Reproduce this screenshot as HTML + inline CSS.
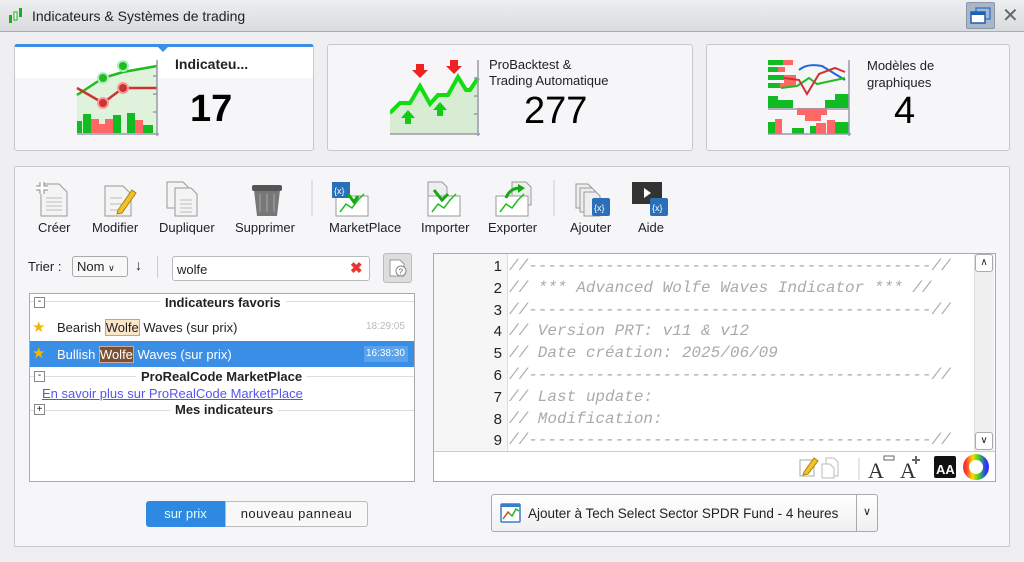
<!DOCTYPE html>
<html><head><meta charset="utf-8"><style>
*{box-sizing:border-box;margin:0;padding:0}
body{width:1024px;height:562px;overflow:hidden;background:#efeff1;font-family:"Liberation Sans",sans-serif;font-size:13px;color:#222;position:relative}
.a{position:absolute}
.title{left:0;top:0;width:1024px;height:32px;background:linear-gradient(#eceef0,#d9dbde);border-bottom:1px solid #a9acb0}
.card{border:1px solid #c9c9cc;border-radius:3px;background:#f6f5f8}
.tb{font-size:13px;text-align:center;color:#222}
.code{font-family:"Liberation Mono",monospace;font-style:italic;color:#aaa;font-size:16px;white-space:pre}
.ln{font-size:15px;color:#222;text-align:right;width:28px}
.grp{font-weight:bold;font-size:13px}
</style></head><body>
<div class="a title"></div>
<svg class="a" style="left:8px;top:6px" width="16" height="20"><rect x="1" y="9" width="3" height="8" fill="#2a2"/><rect x="6" y="6" width="3" height="8" fill="#fff" stroke="#2a2"/><rect x="11" y="2" width="3" height="9" fill="#2a2"/></svg>
<div class="a" style="left:32px;top:8px;font-size:14px;color:#222">Indicateurs &amp; Systèmes de trading</div>
<div class="a" style="left:966px;top:2px;width:29px;height:27px;background:#a9b6c6;border:1px solid #8c98a8;border-radius:2px"></div>
<svg class="a" style="left:970px;top:7px" width="22" height="18"><rect x="6" y="1" width="14" height="11" fill="none" stroke="#3a7bd0" stroke-width="1.5"/><rect x="1" y="5" width="14" height="11" fill="#fff" stroke="#1f5fb8" stroke-width="1.5"/><rect x="1" y="5" width="14" height="3" fill="#1f5fb8"/></svg>
<div class="a" style="left:1002px;top:3px;font-size:20px;color:#666">✕</div>

<!-- cards -->
<div class="a card" style="left:14px;top:44px;width:300px;height:107px;background:#f6f5f8;border-top:3px solid #3a8ee6"></div>
<div class="a" style="left:15px;top:47px;width:298px;height:31px;background:#fff"></div>
<div class="a" style="left:157px;top:46px;width:0;height:0;border-left:6px solid transparent;border-right:6px solid transparent;border-top:6px solid #3a8ee6"></div>
<svg class="a" style="left:75px;top:58px" width="90" height="78"><path d="M2 37 L28 20 L48 14 L82 8 L82 76 L2 76Z" fill="#dff2dc"/><path d="M2 37 L28 20 L48 14 L82 8" stroke="#2b2" stroke-width="2.5" fill="none"/><path d="M2 30 L28 45 L48 30 L82 30" stroke="#c33" stroke-width="2.5" fill="none"/><circle cx="28" cy="20" r="5" fill="#2b2" stroke="#aeb" stroke-width="2"/><circle cx="48" cy="8" r="5" fill="#2b2" stroke="#aeb" stroke-width="2"/><circle cx="28" cy="45" r="5" fill="#c33" stroke="#f99" stroke-width="2"/><circle cx="48" cy="30" r="5" fill="#c33" stroke="#f99" stroke-width="2"/><g fill="#1b2"><rect x="2" y="63" width="5" height="12"/><rect x="8" y="56" width="8" height="19"/><rect x="38" y="57" width="8" height="18"/><rect x="52" y="55" width="8" height="20"/><rect x="68" y="67" width="10" height="8"/></g><g fill="#f66"><rect x="16" y="61" width="8" height="14"/><rect x="24" y="66" width="6" height="9"/><rect x="30" y="61" width="8" height="14"/><rect x="60" y="62" width="8" height="13"/></g><path d="M82 2 V78 M2 76 H84 M82 18h-4M82 36h-4M82 54h-4" stroke="#99a" stroke-width="1.5"/></svg>
<div class="a" style="left:175px;top:56px;font-weight:bold;font-size:14px">Indicateu...</div>
<div class="a" style="left:190px;top:88px;font-weight:bold;font-size:38px;color:#000">17</div>

<div class="a card" style="left:327px;top:44px;width:366px;height:107px"></div>
<svg class="a" style="left:390px;top:60px" width="90" height="76"><path d="M0 53 L10 43 L20 43 L30 26 L40 44 L48 35 L58 35 L68 17 L76 30 L80 30 L88 18 L88 74 L0 74Z" fill="#d8ecd4"/><path d="M0 53 L10 43 L20 43 L30 26 L40 44 L48 35 L58 35 L68 17 L76 30 L80 30 L88 18" stroke="#1d1" stroke-width="4" fill="none"/><path d="M26 4h8v6h4l-8 8-8-8h4z" fill="#e22"/><path d="M60 0h8v6h4l-8 8-8-8h4z" fill="#e22"/><path d="M15 64h6v-6h4l-7-8-7 8h4z" fill="#1c1"/><path d="M47 56h6v-6h4l-7-8-7 8h4z" fill="#1c1"/><path d="M88 0 V76 M0 74 H90 M88 18h-4M88 36h-4M88 54h-4" stroke="#99a" stroke-width="1.5"/></svg>
<div class="a" style="left:489px;top:57px;font-size:13px;line-height:16px">ProBacktest &amp;<br>Trading Automatique</div>
<div class="a" style="left:524px;top:90px;font-size:38px;color:#000">277</div>

<div class="a card" style="left:706px;top:44px;width:304px;height:107px"></div>
<svg class="a" style="left:767px;top:58px" width="90" height="78"><g fill="#1b2"><rect x="1" y="2" width="15" height="5"/><rect x="1" y="9" width="10" height="5"/><rect x="1" y="17" width="16" height="5"/><rect x="1" y="25" width="12" height="5"/><rect x="1" y="38" width="10" height="12"/><rect x="11" y="42" width="15" height="8"/><rect x="58" y="42" width="10" height="8"/><rect x="68" y="36" width="14" height="14"/><rect x="1" y="64" width="12" height="12"/><rect x="25" y="70" width="12" height="6"/><rect x="43" y="68" width="6" height="8"/><rect x="68" y="64" width="14" height="12"/></g><g fill="#f66"><rect x="16" y="2" width="10" height="5"/><rect x="11" y="9" width="7" height="5"/><rect x="17" y="17" width="12" height="12"/><rect x="13" y="25" width="5" height="5"/><rect x="30" y="50" width="30" height="7"/><rect x="38" y="50" width="16" height="13"/><rect x="8" y="61" width="7" height="15"/><rect x="49" y="65" width="10" height="11"/><rect x="60" y="62" width="8" height="14"/></g><path d="M32 12 Q40 5 55 8 L78 22" stroke="#2266dd" stroke-width="2" fill="none"/><path d="M14 30 L30 28 L42 20 L50 26 L78 20" stroke="#2b2" stroke-width="2" fill="none"/><path d="M17 20 L32 22 L40 36 L52 16 L68 10 L78 14" stroke="#c33" stroke-width="2" fill="none"/><path d="M1 51H82M82 2V78M1 76H84" stroke="#99a" stroke-width="1.5"/></svg>
<div class="a" style="left:867px;top:57px;font-size:13px;line-height:17px">Modèles de<br>graphiques</div>
<div class="a" style="left:894px;top:90px;font-size:38px;color:#000">4</div>

<!-- main panel -->
<div class="a" style="left:14px;top:166px;width:996px;height:381px;border:1px solid #c9c9cc;border-radius:2px;background:#f6f5f8"></div>

<!-- toolbar icons -->
<svg class="a" style="left:36px;top:180px" width="520" height="38">
<g fill="#f4f4f4" stroke="#999"><path d="M5 4h18l8 8v24H5z"/><path d="M69 6h18l8 8v22H69z"/><path d="M131 2h16l6 6v20h-22z"/><path d="M139 8h16l6 6v22h-22z"/></g>
<g stroke="#bbb"><path d="M10 18h16M10 22h16M10 26h16M10 30h16M74 18h12M74 24h12M74 30h14M144 20h12M144 24h12M144 28h12M144 32h12"/></g>
<path d="M0 8h12M6 2v12" stroke="#888" stroke-width="5"/><path d="M0 8h12M6 2v12" stroke="#fff" stroke-width="3"/>
<path d="M82 30 L96 10 L100 13 L86 33 L81 34z" fill="#f3c030" stroke="#a80"/>
<path d="M218 10h26l-3 26h-20z" fill="#777"/><rect x="216" y="5" width="30" height="6" rx="2" fill="#555"/><path d="M224 14v18M231 14v18M238 14v18" stroke="#aaa"/>
<line x1="276" y1="0" x2="276" y2="36" stroke="#ccc"/>
<rect x="300" y="16" width="32" height="20" fill="#fff" stroke="#999"/><path d="M304 32l6-8 6 4 6-8 6 -6" stroke="#2b2" stroke-width="1.5" fill="none"/><rect x="296" y="2" width="18" height="16" fill="#2a6fb8"/><text x="298" y="14" font-size="9" fill="#fff" font-family="Liberation Sans">{x}</text><path d="M312 14 l6 8 4-6" stroke="#1a1" stroke-width="3" fill="none"/>
<path d="M392 2h14l5 5v18h-19z" fill="#eee" stroke="#999"/><rect x="392" y="16" width="32" height="20" fill="#fff" stroke="#999"/><path d="M396 32l6-8 6 4 6-8 6 -6" stroke="#2b2" stroke-width="1.5" fill="none"/><path d="M398 10 l8 10 6-6" stroke="#1a1" stroke-width="3" fill="none"/>
<path d="M476 2h14l5 5v18h-19z" fill="#eee" stroke="#999"/><rect x="460" y="16" width="32" height="20" fill="#fff" stroke="#999"/><path d="M464 32l6-8 6 4 6-8 6 -6" stroke="#2b2" stroke-width="1.5" fill="none"/><path d="M470 18 q4-10 14-10" stroke="#1a1" stroke-width="3" fill="none"/><path d="M482 4l7 4-7 5z" fill="#1a1"/>
<line x1="518" y1="0" x2="518" y2="36" stroke="#ccc"/>
</svg>
<svg class="a" style="left:572px;top:180px" width="100" height="40"><g fill="#eee" stroke="#999"><path d="M4 4h12l4 4v20H4z"/><path d="M8 8h12l4 4v20H8z"/><path d="M12 12h12l4 4v20H12z"/></g><rect x="20" y="18" width="18" height="18" rx="2" fill="#2a6fb8"/><text x="22" y="31" font-size="9" fill="#fff" font-family="Liberation Sans">{x}</text>
<rect x="60" y="2" width="30" height="22" fill="#333"/><path d="M72 8v10l7-5z" fill="#fff"/><rect x="78" y="18" width="18" height="18" rx="2" fill="#2a6fb8"/><text x="80" y="31" font-size="9" fill="#fff" font-family="Liberation Sans">{x}</text></svg>
<div class="a tb" style="left:38px;top:220px">Créer</div>
<div class="a tb" style="left:92px;top:220px">Modifier</div>
<div class="a tb" style="left:159px;top:220px">Dupliquer</div>
<div class="a tb" style="left:235px;top:220px">Supprimer</div>
<div class="a tb" style="left:329px;top:220px">MarketPlace</div>
<div class="a tb" style="left:421px;top:220px">Importer</div>
<div class="a tb" style="left:488px;top:220px">Exporter</div>
<div class="a tb" style="left:570px;top:220px">Ajouter</div>
<div class="a tb" style="left:638px;top:220px">Aide</div>

<!-- sort / search -->
<div class="a" style="left:28px;top:259px">Trier :</div>
<div class="a" style="left:72px;top:256px;width:56px;height:21px;border:1px solid #aaa;border-radius:3px;background:#f8f8f8;padding:2px 0 0 4px">Nom <span style="font-size:9px">&#x2228;</span></div>
<div class="a" style="left:135px;top:257px;font-weight:bold;font-size:14px">&#x2193;</div>
<div class="a" style="left:157px;top:256px;width:1px;height:22px;background:#ccc"></div>
<div class="a" style="left:172px;top:256px;width:198px;height:25px;border:1px solid #bbb;border-radius:3px;background:#fff;padding:5px 0 0 4px">wolfe</div>
<div class="a" style="left:350px;top:259px;color:#e33;font-weight:bold;font-size:15px">✖</div>
<div class="a" style="left:383px;top:253px;width:29px;height:30px;background:#ddd;border:1px solid #bbb;border-radius:3px"></div>
<svg class="a" style="left:388px;top:258px" width="20" height="20"><path d="M2 2h10l4 4v12H2z" fill="#fff" stroke="#999"/><circle cx="13" cy="13" r="5" fill="#fff" stroke="#888"/><text x="10.5" y="16.5" font-size="8" fill="#666">?</text></svg>

<!-- list -->
<div class="a" style="left:29px;top:293px;width:386px;height:189px;border:1px solid #aaa;background:#fff"></div>
<div class="a" style="left:30px;top:301px;width:384px;height:1px;background:#ddd"></div>
<div class="a" style="left:34px;top:297px;width:11px;height:11px;border:1px solid #888;font-size:10px;line-height:8px;text-align:center;background:#fff">-</div>
<div class="a grp" style="left:160px;top:295px;background:#fff;padding:0 5px">Indicateurs favoris</div>
<div class="a" style="left:32px;top:318px;color:#f3b800;font-size:15px">★</div>
<div class="a" style="left:57px;top:320px">Bearish <span style="background:#fbe6c8;border:1px solid #d9a060">Wolfe</span> Waves (sur prix)</div>
<div class="a" style="left:366px;top:321px;font-size:10px;color:#bbb">18:29:05</div>
<div class="a" style="left:30px;top:341px;width:384px;height:26px;background:#3a8ee6"></div>
<div class="a" style="left:32px;top:344px;color:#f3b800;font-size:15px">★</div>
<div class="a" style="left:57px;top:347px;color:#fff">Bullish <span style="background:#7a5230;border:1px solid #caa">Wolfe</span> Waves (sur prix)</div>
<div class="a" style="left:364px;top:346px;width:44px;height:16px;background:#5aa2ec;font-size:10px;color:#fff;padding:2px">16:38:30</div>
<div class="a" style="left:30px;top:376px;width:384px;height:1px;background:#ddd"></div>
<div class="a" style="left:34px;top:371px;width:11px;height:11px;border:1px solid #888;font-size:10px;line-height:8px;text-align:center;background:#fff">-</div>
<div class="a grp" style="left:136px;top:369px;background:#fff;padding:0 5px">ProRealCode MarketPlace</div>
<div class="a" style="left:42px;top:386px;color:#5555ee;text-decoration:underline">En savoir plus sur ProRealCode MarketPlace</div>
<div class="a" style="left:30px;top:410px;width:384px;height:1px;background:#ddd"></div>
<div class="a" style="left:34px;top:404px;width:11px;height:11px;border:1px solid #888;font-size:10px;line-height:9px;text-align:center;background:#fff">+</div>
<div class="a grp" style="left:170px;top:402px;background:#fff;padding:0 5px">Mes indicateurs</div>

<!-- editor -->
<div class="a" style="left:433px;top:253px;width:563px;height:229px;border:1px solid #aaa;background:#fff"></div>
<div class="a" style="left:434px;top:254px;width:74px;height:197px;background:#f6f6f6;border-right:1px solid #ddd"></div>
<div class="a" style="left:434px;top:451px;width:561px;height:1px;background:#ccc"></div>
<div class="a" style="left:474px;top:256px;line-height:21.8px" >
<div class="ln">1</div><div class="ln">2</div><div class="ln">3</div><div class="ln">4</div><div class="ln">5</div><div class="ln">6</div><div class="ln">7</div><div class="ln">8</div><div class="ln">9</div></div>
<div class="a code" style="left:509px;top:256px;line-height:21.8px">//------------------------------------------//
// *** Advanced Wolfe Waves Indicator *** //
//------------------------------------------//
// Version PRT: v11 &amp; v12
// Date création: 2025/06/09
//------------------------------------------//
// Last update:
// Modification:
//------------------------------------------//</div>
<div class="a" style="left:974px;top:254px;width:20px;height:197px;background:#f0f0f0;border-left:1px solid #ddd"></div>
<div class="a" style="left:975px;top:254px;width:18px;height:18px;border:1px solid #aaa;border-radius:3px;background:#fff;font-size:10px;text-align:center;line-height:16px">&#x2227;</div>
<div class="a" style="left:975px;top:432px;width:18px;height:18px;border:1px solid #aaa;border-radius:3px;background:#fff;font-size:10px;text-align:center;line-height:16px">&#x2228;</div>
<svg class="a" style="left:798px;top:454px" width="195" height="26"><rect x="2" y="6" width="14" height="16" fill="#fff" stroke="#aaa"/><path d="M6 18 L16 4 L20 7 L10 20 L5 21z" fill="#f3c030" stroke="#a80"/><path d="M28 4h8l4 4v14H28z" fill="#fff" stroke="#bbb"/><path d="M24 10h8l4 4v10H24z" fill="#fff" stroke="#bbb"/><line x1="61" y1="4" x2="61" y2="26" stroke="#ccc"/><text x="70" y="24" font-size="22" font-family="Liberation Serif" fill="#333">A</text><rect x="86" y="2" width="10" height="4" fill="none" stroke="#666"/><text x="102" y="24" font-size="22" font-family="Liberation Serif" fill="#333">A</text><path d="M118 2v8M114 6h8" stroke="#666" stroke-width="2"/><rect x="136" y="2" width="22" height="22" rx="2" fill="#111"/><text x="138" y="20" font-size="13" font-weight="bold" fill="#fff" font-family="Liberation Sans">AA</text><circle cx="178" cy="13" r="10" fill="none" stroke="url(#g)" stroke-width="6"/><defs><linearGradient id="g"><stop offset="0" stop-color="#f33"/><stop offset=".33" stop-color="#fd0"/><stop offset=".66" stop-color="#3c3"/><stop offset="1" stop-color="#33f"/></linearGradient></defs></svg>

<!-- bottom buttons -->
<div class="a" style="left:146px;top:501px;width:79px;height:26px;background:#2f89e3;border-radius:3px 0 0 3px;color:#dfe;text-align:center;line-height:26px">sur prix</div>
<div class="a" style="left:225px;top:501px;width:143px;height:26px;background:#f8f8f8;border:1px solid #bbb;border-radius:0 3px 3px 0;text-align:center;line-height:24px;letter-spacing:0.5px">nouveau panneau</div>
<div class="a" style="left:491px;top:494px;width:387px;height:38px;border:1px solid #aaa;border-radius:3px;background:linear-gradient(#fff,#f0f0f0)"></div>
<div class="a" style="left:856px;top:494px;width:1px;height:38px;background:#aaa"></div>
<div class="a" style="left:863px;top:505px;font-size:11px">&#x2228;</div>
<svg class="a" style="left:500px;top:503px" width="22" height="21"><rect x="1" y="1" width="19" height="18" rx="1" fill="#fff" stroke="#3a7bd0" stroke-width="1.5"/><rect x="1" y="1" width="19" height="3" fill="#3a7bd0"/><path d="M3 16l5-7 4 4 4-7 3 2" stroke="#2b2" stroke-width="1.5" fill="none"/><path d="M4 14l5-5" stroke="#e33"/></svg>
<div class="a" style="left:528px;top:506px;font-size:13.5px">Ajouter à Tech Select Sector SPDR Fund - 4 heures</div>
</body></html>
